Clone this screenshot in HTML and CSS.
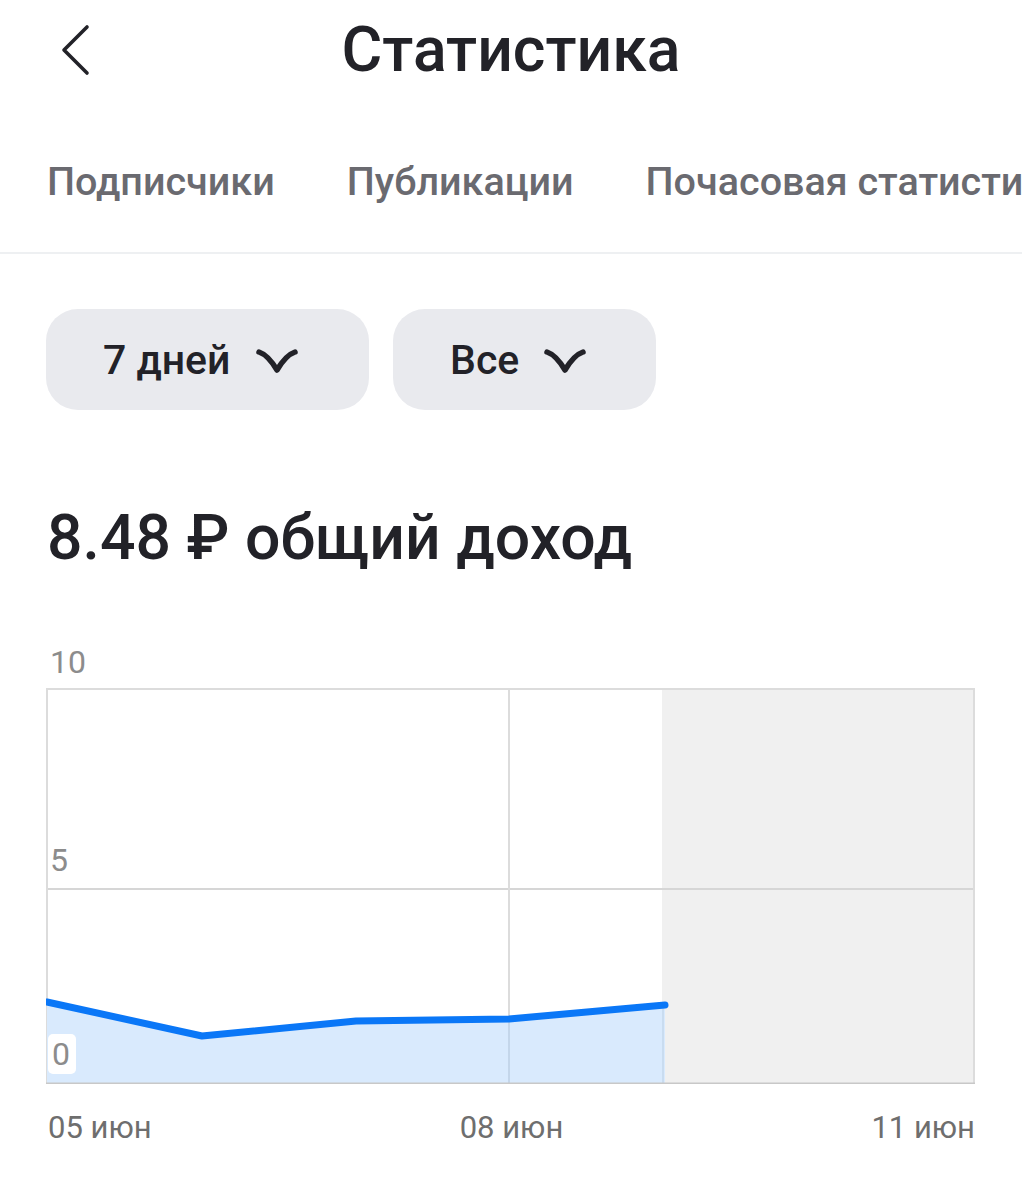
FILE: index.html
```html
<!DOCTYPE html>
<html lang="ru">
<head>
<meta charset="utf-8">
<title>Статистика</title>
<link rel="stylesheet" href="styles.css">
</head>
<body>
<div class="page">
  <header class="header">
    <button class="back" aria-label="Назад">
      <svg width="32" height="52" viewBox="0 0 32 52"><path d="M28 3 L5 26 L28 49" fill="none" stroke="#222228" stroke-width="3.6" stroke-linecap="round" stroke-linejoin="round"/></svg>
    </button>
    <h1 class="title">Статистика</h1>
    <div></div>
  </header>
  <nav class="tabs">
    <span class="tab">Подписчики</span>
    <span class="tab">Публикации</span>
    <span class="tab">Почасовая статистика</span>
  </nav>
  <div class="filters">
    <button class="pill pill-days">7 дней
      <svg class="chev" width="44" height="28" viewBox="0 0 44 28"><path d="M4 5 Q13 8 22 23 Q31 8 40 5" fill="none" stroke="#222228" stroke-width="5.5" stroke-linecap="round" stroke-linejoin="round"/></svg>
    </button>
    <button class="pill pill-all">Все
      <svg class="chev" width="44" height="28" viewBox="0 0 44 28"><path d="M4 5 Q13 8 22 23 Q31 8 40 5" fill="none" stroke="#222228" stroke-width="5.5" stroke-linecap="round" stroke-linejoin="round"/></svg>
    </button>
  </div>
  <h2 class="total">8.48 ₽ общий доход</h2>
  <section class="chart">
    <div class="plot">
      <svg class="grid" width="930" height="432" viewBox="0 0 930 432">
        <rect x="616" y="36" width="312" height="396" fill="#f0f0f0"/>
        <line x1="0" y1="37" x2="929" y2="37" stroke="#dcdcdc" stroke-width="2"/>
        <line x1="0" y1="237" x2="929" y2="237" stroke="#d6d6d6" stroke-width="2"/>
        <line x1="1" y1="36" x2="1" y2="432" stroke="#dcdcdc" stroke-width="2"/>
        <line x1="463" y1="36" x2="463" y2="432" stroke="#dcdcdc" stroke-width="2"/>
        <line x1="928" y1="36" x2="928" y2="432" stroke="#dcdcdc" stroke-width="2"/>
        <path d="M1 350 L156 384 L310 369 L463 367 L619 353 L619 432 L1 432 Z" fill="#d9eafd"/>
        <line x1="463" y1="367" x2="463" y2="432" stroke="#c4d6ea" stroke-width="2"/>
        <line x1="617" y1="353" x2="617" y2="432" stroke="#c9dcf0" stroke-width="2"/>
        <path d="M1 350 L156 384 L310 369 L463 367 L619 353" fill="none" stroke="#0a77f7" stroke-width="7" stroke-linecap="round" stroke-linejoin="round"/>
        <line x1="0" y1="432" x2="929" y2="432" stroke="#c8c8c8" stroke-width="3"/>
      </svg>
      <span class="ylabel y10">10</span>
      <span class="ylabel y5">5</span>
      <span class="ylabel y0">0</span>
    </div>
    <div class="xlabels">
      <span>05 июн</span>
      <span>08 июн</span>
      <span>11 июн</span>
    </div>
  </section>
</div>
</body>
</html>
```

FILE: styles.css
```css
* { box-sizing: border-box; }
html, body { margin: 0; padding: 0; background: #fff; }
body { font-family: Roboto, "Noto Sans", "Liberation Sans", sans-serif; color: #222228; }
.page { width: 1022px; overflow: hidden; }

.header {
  display: grid;
  grid-template-columns: 1fr auto 1fr;
  align-items: center;
  height: 100px;
}
.back {
  justify-self: start;
  margin-left: 59px;
  padding: 0;
  border: 0;
  background: none;
  display: flex;
}
.title {
  margin: 0;
  font-size: 62.5px;
  font-weight: 500;
  line-height: 1;
}

.tabs {
  display: flex;
  gap: 72px;
  padding: 10px 0 0 47px;
  height: 154px;
  align-items: center;
  white-space: nowrap;
  overflow: hidden;
  border-bottom: 2px solid #eef0f2;
}
.tab {
  font-size: 39.5px;
  font-weight: 500;
  color: #6a6a70;
  flex-shrink: 0;
}

.filters {
  display: flex;
  gap: 24px;
  padding: 55px 0 0 46px;
}
.pill {
  display: flex;
  align-items: center;
  gap: 24px;
  height: 101px;
  border: 0;
  border-radius: 32px;
  background: #e9eaee;
  font-family: inherit;
  font-size: 41px;
  font-weight: 500;
  color: #222228;
  padding: 0;
}
.pill-days { width: 323px; padding-left: 57px; }
.pill-all { width: 263px; padding-left: 57px; }
.chev { margin-top: 2px; }

.total {
  margin: 0;
  padding: 92px 0 0 47px;
  font-size: 62.5px;
  font-weight: 500;
  line-height: 72px;
}

.chart { padding: 78px 0 0 46px; width: 1022px; }
.plot { position: relative; width: 930px; height: 432px; }
.grid { display: block; }
.ylabel {
  position: absolute;
  left: 4px;
  font-size: 32px;
  color: #8c8c8c;
  line-height: 36px;
}
.y10 { top: -8px; }
.y5 { top: 190px; }
.y0 {
  top: 382px;
  left: 2px;
  background: #fff;
  border-radius: 5px;
  padding: 2px 6px 2px 4px;
}
.xlabels {
  display: flex;
  justify-content: space-between;
  width: 929px;
  padding-top: 26px;
  font-size: 31px;
  color: #6e6e6e;
  line-height: 36px;
  padding-left: 2px;
}
```
